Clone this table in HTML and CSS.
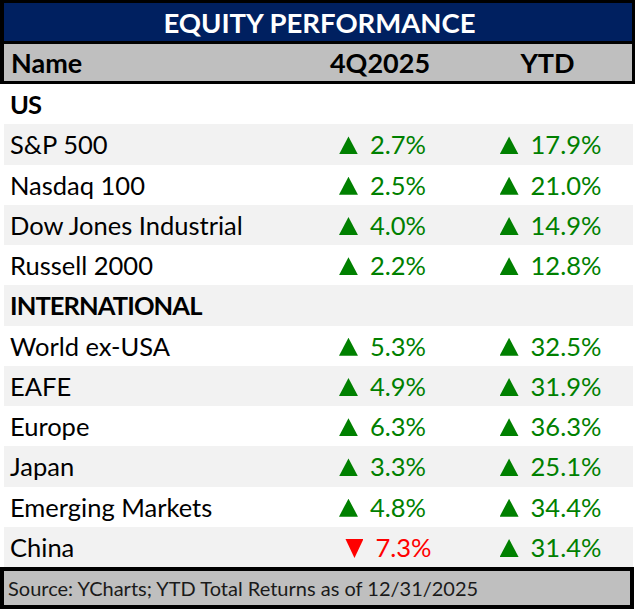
FILE: index.html
```html
<!DOCTYPE html>
<html lang="en">
<head>
<meta charset="utf-8">
<title>Equity Performance</title>
<link rel="stylesheet" href="styles.css">
</head>
<body>
<div class="report">
  <div class="head">
    <div class="title">EQUITY PERFORMANCE</div>
    <div class="colhead grid">
      <span class="c-name">Name</span>
      <span class="c-val">4Q2025</span>
      <span class="c-val c-ytd">YTD</span>
    </div>
  </div>
  <div class="rows">
    <div class="row grid section"><span class="c-name">US</span></div>
    <div class="row grid"><span class="c-name">S&amp;P 500</span><span class="c-val up"><i class="tri"></i>2.7%</span><span class="c-val c-ytd up"><i class="tri"></i>17.9%</span></div>
    <div class="row grid"><span class="c-name">Nasdaq 100</span><span class="c-val up"><i class="tri"></i>2.5%</span><span class="c-val c-ytd up"><i class="tri"></i>21.0%</span></div>
    <div class="row grid"><span class="c-name">Dow Jones Industrial</span><span class="c-val up"><i class="tri"></i>4.0%</span><span class="c-val c-ytd up"><i class="tri"></i>14.9%</span></div>
    <div class="row grid"><span class="c-name">Russell 2000</span><span class="c-val up"><i class="tri"></i>2.2%</span><span class="c-val c-ytd up"><i class="tri"></i>12.8%</span></div>
    <div class="row grid section"><span class="c-name">INTERNATIONAL</span></div>
    <div class="row grid"><span class="c-name">World ex-USA</span><span class="c-val up"><i class="tri"></i>5.3%</span><span class="c-val c-ytd up"><i class="tri"></i>32.5%</span></div>
    <div class="row grid"><span class="c-name">EAFE</span><span class="c-val up"><i class="tri"></i>4.9%</span><span class="c-val c-ytd up"><i class="tri"></i>31.9%</span></div>
    <div class="row grid"><span class="c-name">Europe</span><span class="c-val up"><i class="tri"></i>6.3%</span><span class="c-val c-ytd up"><i class="tri"></i>36.3%</span></div>
    <div class="row grid"><span class="c-name">Japan</span><span class="c-val up"><i class="tri"></i>3.3%</span><span class="c-val c-ytd up"><i class="tri"></i>25.1%</span></div>
    <div class="row grid"><span class="c-name">Emerging Markets</span><span class="c-val up"><i class="tri"></i>4.8%</span><span class="c-val c-ytd up"><i class="tri"></i>34.4%</span></div>
    <div class="row grid"><span class="c-name">China</span><span class="c-val down"><i class="tri"></i>7.3%</span><span class="c-val c-ytd up"><i class="tri"></i>31.4%</span></div>
  </div>
  <div class="footer">Source: YCharts; YTD Total Returns as of 12/31/2025</div>
</div>
</body>
</html>
```

FILE: styles.css
```css
html, body {
  margin: 0;
  padding: 0;
  background: #ffffff;
}

body {
  font-family: Lato, "Open Sans", "DejaVu Sans", sans-serif;
  color: #000000;
}

.report {
  width: 635px;
}

.head {
  border: 3px solid #000000;
  border-left-width: 4px;
}

.title {
  height: 38px;
  background: #002060;
  color: #ffffff;
  font-weight: 700;
  font-size: 27.5px;
  display: flex;
  align-items: center;
  justify-content: center;
  padding-left: 3px;
}

.grid {
  display: grid;
  grid-template-columns: 296px 165px 1fr;
  align-items: center;
}

.colhead {
  height: 37px;
  border-top: 3px solid #000000;
  background: #bfbfbf;
  font-weight: 700;
  font-size: 27px;
}

.colhead .c-name {
  padding-left: 7px;
}

.colhead .c-val {
  padding-right: 5px;
}

.rows {
  margin: 0 2px 0 4px;
}

.row {
  height: 40.25px;
  font-size: 25.5px;
}

.row:nth-child(even) {
  background: #f2f2f2;
}

.section {
  font-weight: 700;
  letter-spacing: -0.9px;
}

.c-name {
  padding-left: 6px;
  white-space: nowrap;
}

.c-val {
  text-align: center;
  white-space: nowrap;
}

.c-ytd {
  padding-left: 3px;
}

.up {
  color: #008000;
}

.down {
  color: #ff0000;
  padding-left: 12px;
}

.tri {
  display: inline-block;
  margin-right: 12px;
}

.up .tri {
  width: 19px;
  height: 18px;
  background: #008000;
  clip-path: polygon(50% 0, 100% 100%, 0 100%);
}

.down .tri {
  width: 18px;
  height: 19px;
  background: #ff0000;
  clip-path: polygon(0 0, 100% 0, 50% 100%);
  vertical-align: -1px;
}

.footer {
  margin-right: 1px;
  height: 34px;
  border: 4px solid #000000;
  background: #bfbfbf;
  color: #1a1a1a;
  font-size: 20px;
  display: flex;
  align-items: center;
  padding-left: 4px;
}
```
